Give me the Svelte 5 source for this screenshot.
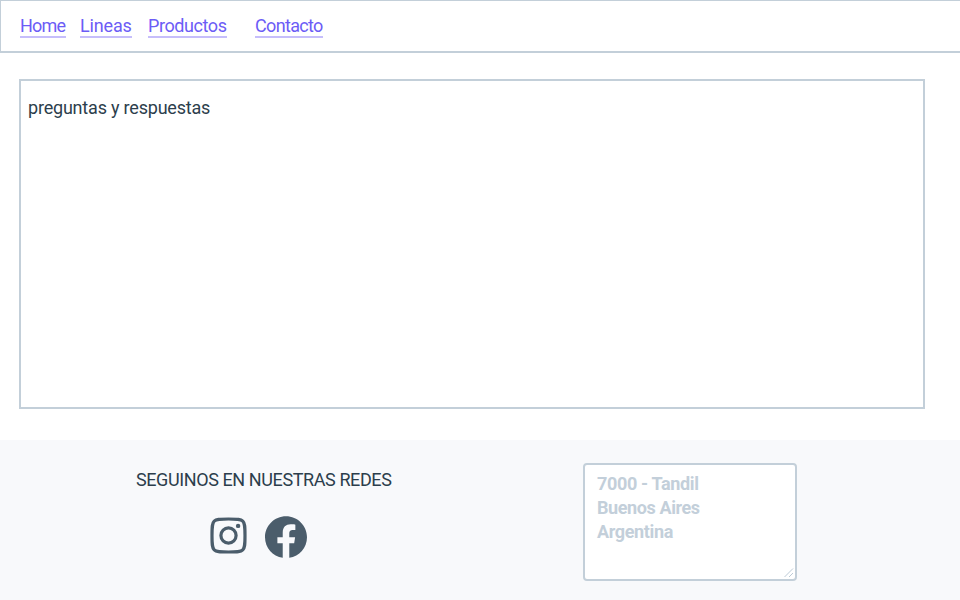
<script>
  const links = [
    { label: 'Home', width: 46, gap: 14, spacing: -0.8 },
    { label: 'Lineas', width: 52, gap: 16, spacing: -0.15 },
    { label: 'Productos', width: 79, gap: 28, spacing: -0.42 },
    { label: 'Contacto', width: 68, gap: 0, spacing: -0.67 }
  ];
  const address = [
    { text: '7000 - Tandil', spacing: -0.35 },
    { text: 'Buenos Aires', spacing: -0.4 },
    { text: 'Argentina', spacing: -0.35 }
  ];
</script>

<div class="page">
  <nav>
    {#each links as link}
      <a href="#top" style="width: {link.width}px; margin-right: {link.gap}px; letter-spacing: {link.spacing}px">{link.label}</a>
    {/each}
  </nav>
  <main><p>preguntas y respuestas</p></main>
  <footer>
    <section class="social">
      <h2>SEGUINOS EN NUESTRAS REDES</h2>
      <div class="icons">
        <svg class="instagram" width="38" height="38" viewBox="0 0 38 38" fill="none">
          <path d="M19.500 3C10 3 7.200 3.200 5.200 5.200S3 10 3 19.500s.2 12.300 2.200 14.300S10 36 19.500 36s12.300-.2 14.300-2.200S36 29 36 19.500s-.2-12.300-2.200-14.300S29 3 19.500 3Z" stroke="currentColor" stroke-width="3.200" />
          <circle cx="19.500" cy="19.500" r="7.600" stroke="currentColor" stroke-width="3.200" />
          <circle cx="29.100" cy="9.900" r="2.200" fill="currentColor" />
        </svg>
        <svg class="facebook" width="42" height="42" viewBox="0 0 24 24" fill="currentColor">
          <path d="M24 12.073c0-6.627-5.373-12-12-12s-12 5.373-12 12c0 5.990 4.388 10.954 10.125 11.854v-8.385H7.078v-3.470h3.047V9.430c0-3.007 1.792-4.669 4.533-4.669 1.312 0 2.686.235 2.686.235v2.953H15.830c-1.491 0-1.956.925-1.956 1.874v2.250h3.328l-.532 3.470h-2.796v8.385C19.612 23.027 24 18.062 24 12.073Z" />
        </svg>
      </div>
    </section>
    <div class="address">
      {#each address as line}<div class="line" style="letter-spacing: {line.spacing}px">{line.text}</div>{/each}
      <svg class="grip" width="10" height="10" viewBox="0 0 10 10" fill="none" stroke="#bccad6">
        <path d="M.5 9 9 .5M5 9l4-4" />
      </svg>
    </div>
  </footer>
</div>

<style>
  :global(body) { margin: 0; background: #fff; }
  .page {
    box-sizing: border-box;
    width: 960px;
    height: 600px;
    overflow: hidden;
    display: flex;
    flex-direction: column;
    background: #fff;
    color: #2c3e4c;
    font: 400 18px/24px Roboto, 'Open Sans', sans-serif;
  }
  nav {
    box-sizing: border-box;
    height: 53px;
    flex: none;
    display: flex;
    align-items: flex-start;
    padding: 13px 0 0 19px;
    border: solid #c3cfd9;
    border-width: 1px 0 2px 1px;
  }
  a {
    box-sizing: border-box;
    flex: none;
    height: 24px;
    white-space: nowrap;
    font-weight: 450;
    color: #6c5cf6;
    text-decoration: none;
    border-bottom: 2px solid #c6befb;
  }
  main {
    box-sizing: border-box;
    width: 906px;
    height: 330px;
    flex: none;
    margin: 26px 0 31px 19px;
    padding: 15px 7px;
    border: 2px solid #c3cfd9;
  }
  p {
    margin: 0;
    white-space: nowrap;
    font-weight: 450;
    letter-spacing: -0.2px;
  }
  footer {
    height: 160px;
    flex: none;
    display: flex;
    background: #f8f9fb;
  }
  .social { width: 583px; flex: none; }
  h2 {
    margin: 28px 0 0 136px;
    font: inherit;
    white-space: nowrap;
    letter-spacing: -0.4px;
  }
  .icons {
    display: flex;
    align-items: flex-start;
    margin: 24px 0 0 209px;
    color: #4b5d6b;
  }
  .facebook { margin-left: 18px; }
  .address {
    box-sizing: border-box;
    position: relative;
    width: 214px;
    height: 118px;
    margin-top: 23px;
    padding: 7px 12px;
    border: 2px solid #c3cfd9;
    border-radius: 4px;
    background: #fff;
    color: #c3cfda;
    font-weight: 700;
  }
  .line { white-space: nowrap; }
  .grip { position: absolute; right: 1px; bottom: 1px; }
</style>
